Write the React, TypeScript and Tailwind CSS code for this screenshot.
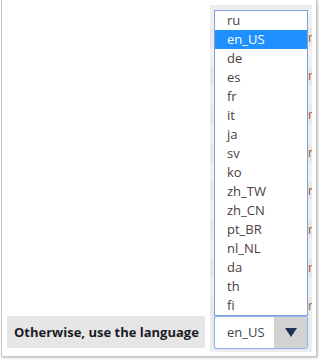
import React from "react";

// opsi bahasa di dropdown
const languages = [
  "ru", "en_US", "de", "es", "fr", "it", "ja", "sv",
  "ko", "zh_TW", "zh_CN", "pt_BR", "nl_NL", "da", "th", "fi",
];

// baris tabel di belakang dropdown (cuma kelihatan ujungnya)
const backRows = Array.from({ length: 16 }, (_, i) => i);

const App: React.FC = () => {
  const selected = "en_US";

  return (
    <div className="w-[319px] h-[361px] bg-white font-['Open_Sans',sans-serif]">
      <div className="ml-[1px] w-[316px] h-[357px] border-l border-r border-b border-[#c8c8c8] shadow-[1px_1px_2px_rgba(0,0,0,0.25)] flex pt-[5px] pb-[4px]">
        {/* kiri: label */}
        <div className="flex-1 flex flex-col justify-end pl-[5px] pr-[5px] pb-[4px]">
          <div className="h-[32px] bg-[#e6e6e6] flex items-center pl-[7px]">
            <span className="text-[13px] font-bold text-[#1c1c28] leading-none">
              Otherwise, use the language
            </span>
          </div>
        </div>

        {/* kanan: panel dropdown */}
        <div className="relative w-[102px] mr-[4px] bg-[#ececec] flex flex-col">
          <div className="flex-1 flex flex-col pt-[4px] overflow-hidden">
            {backRows.map((i) => (
              <div
                key={i}
                className={`h-[21.5px] flex items-center justify-end pr-[1px] ${i % 2 === 0 ? "bg-[#f1f1f1]" : "bg-[#e8e8e8]"}`}
              >
                {i % 2 === 1 && (
                  <span className="text-[12px] leading-none text-[#a0522d] translate-x-[2px]">r</span>
                )}
              </div>
            ))}
          </div>

          {/* select */}
          <div className="mx-[4px] mb-[3px] h-[33px] flex border border-[#8fb4ee] rounded-[3px] bg-white overflow-hidden shadow-[0_0_1px_#8fb4ee]">
            <div className="flex-1 flex items-center pl-[12px] text-[13px] text-[#444]">
              {selected}
            </div>
            <div className="w-[33px] bg-[#d2d2d2] flex items-center justify-center">
              <svg width="12" height="9" viewBox="0 0 12 9">
                <path d="M0 0 L12 0 L6 9 Z" fill="#1b3358" />
              </svg>
            </div>
          </div>

          {/* list terbuka */}
          <div className="absolute left-[4px] top-[5px] w-[94px] border border-[#7f9fd8] bg-white flex flex-col">
            {languages.map((lang) => (
              <div
                key={lang}
                className={`h-[19px] flex items-center pl-[12px] text-[13px] leading-none ${lang === selected ? "bg-[#1e90ff] text-white" : "text-[#4a4040]"}`}
              >
                {lang}
              </div>
            ))}
          </div>
        </div>
      </div>
    </div>
  );
};

export default App;
